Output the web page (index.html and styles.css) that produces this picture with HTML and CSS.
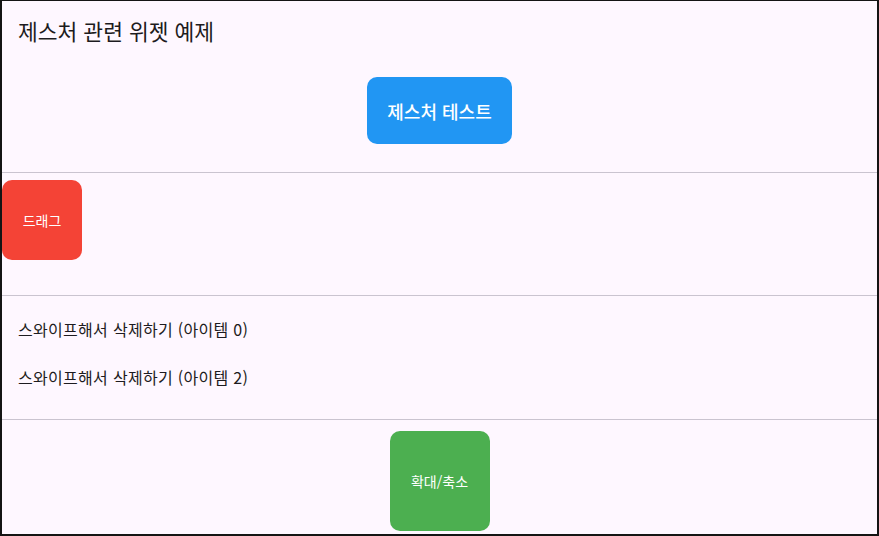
FILE: index.html
```html
<!DOCTYPE html>
<html lang="ko">
<head>
  <meta charset="UTF-8">
  <title>제스처 관련 위젯 예제</title>
  <meta name="viewport" content="width=device-width, initial-scale=1.0">
  <link rel="stylesheet" href="styles.css">
</head>
<body>
  <div class="app">
    <section class="top">
      <h1 class="title">제스처 관련 위젯 예제</h1>
      <div class="center">
        <button class="test-btn">제스처 테스트</button>
      </div>
    </section>

    <hr class="divider">

    <section class="drag-area">
      <div class="box drag-box">드래그</div>
    </section>

    <hr class="divider">

    <ul class="swipe-list">
      <li>스와이프해서 삭제하기 (아이템 0)</li>
      <li>스와이프해서 삭제하기 (아이템 2)</li>
    </ul>

    <hr class="divider">

    <section class="center">
      <div class="box zoom-box">확대/축소</div>
    </section>
  </div>
</body>
</html>
```

FILE: styles.css
```css
* {
  box-sizing: border-box;
}

body {
  margin: 0;
  background: #141414;
  font-family: "Noto Sans CJK KR", "Noto Sans", sans-serif;
  color: #1d1b20;
}

.app {
  margin: 1px 2px 2px 2px;
  height: 533px;
  background: #fef7ff;
  overflow: hidden;
  display: flex;
  flex-direction: column;
}

.top {
  padding-top: 15px;
  height: 171px;
}

.title {
  margin: 0 0 31px 16px;
  font-size: 21.5px;
  font-weight: 400;
  line-height: 30px;
}

.center {
  display: flex;
  justify-content: center;
}

.test-btn {
  width: 145px;
  height: 67px;
  border: none;
  border-radius: 10px;
  background: #2196f3;
  color: #fff;
  font-family: inherit;
  font-size: 18px;
  font-weight: 500;
}

.divider {
  margin: 0;
  border: none;
  height: 1px;
  flex: none;
  background: #cac4d0;
}

.drag-area {
  height: 122px;
  padding-top: 7px;
  flex: none;
}

.box {
  display: flex;
  align-items: center;
  justify-content: center;
  border-radius: 10px;
  color: #fff;
  font-size: 14px;
}

.drag-box {
  width: 80px;
  height: 80px;
  background: #f44336;
}

.swipe-list {
  list-style: none;
  margin: 0;
  padding: 9px 0 18px;
  flex: none;
}

.swipe-list li {
  height: 48px;
  line-height: 48px;
  padding-left: 16px;
  font-size: 16px;
  letter-spacing: 0.3px;
}

.zoom-box {
  margin-top: 11px;
  width: 100px;
  height: 100px;
  background: #4caf50;
}
```
